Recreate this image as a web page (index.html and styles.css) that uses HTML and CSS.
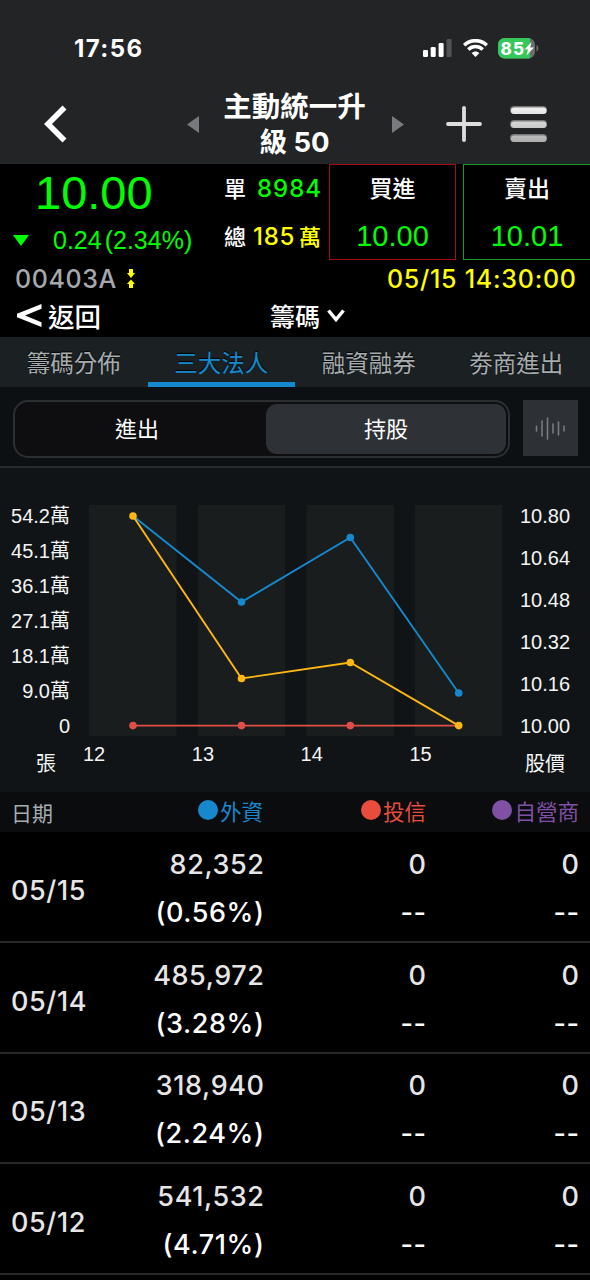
FILE: index.html
```html
<!DOCTYPE html>
<html lang="zh-Hant">
<head>
<meta charset="utf-8">
<title>主動統一升級50</title>
<link rel="stylesheet" href="styles.css">
</head>
<body>
<div class="app">
  <header class="top">
    <div class="status">
      <span class="clock">17:56</span>
      <div class="status-icons">
        <svg width="29" height="18" viewBox="0 0 29 18"><g fill="#fff"><rect x="0" y="11" width="5" height="7" rx="1.3"/><rect x="7.7" y="8" width="5" height="10" rx="1.3"/><rect x="15.6" y="4" width="5" height="14" rx="1.3"/></g><rect x="23.6" y="0" width="5" height="18" rx="1.3" fill="#515355"/></svg>
        <svg width="25" height="18" viewBox="0 0 25 18" fill="none" stroke="#fff" stroke-width="3.5"><path d="M1.2 6.2C7.5 .1 17.500 .1 23.800 6.200"/><path d="M5.300 10.500C9.400 6.500 15.600 6.500 19.700 10.500"/><path d="M12.500 18L8.600 14.100C10.700 12 14.300 12 16.400 14.100Z" fill="#fff" stroke="none"/></svg>
        <svg class="battery" width="41" height="21" viewBox="0 0 41 21"><defs><clipPath id="cell"><rect width="37" height="20.500" rx="6.500"/></clipPath></defs><g clip-path="url(#cell)"><rect width="37" height="21" fill="#6b6d6f"/><rect width="32" height="21" fill="#34c759"/></g><path d="M38.500 7C41 8 41 12.500 38.500 13.500Z" fill="#6b6d6f"/><text x="2.500" y="16.500" class="charge" textLength="23.500">85</text><path d="M33.500 4L26.500 11.500H30L28.500 17.500L36 9.500H32.200Z" fill="#fff"/></svg>
      </div>
    </div>
    <div class="nav">
      <svg class="back" width="24" height="38" viewBox="0 0 24 38"><path d="M20.500 2.500L4 19L20.500 35.500" fill="none" stroke="#fff" stroke-width="5.600"/></svg>
      <svg class="prev" width="12" height="17" viewBox="0 0 12 17"><path d="M12 0V17L0 8.500Z" fill="#777b7e"/></svg>
      <h1 class="title">主動統一升<br><span class="level">級 50</span></h1>
      <svg class="next" width="12" height="17" viewBox="0 0 12 17"><path d="M0 0V17L12 8.500Z" fill="#777b7e"/></svg>
      <svg class="plus" width="36" height="36" viewBox="0 0 36 36"><path d="M18 2V34M2 18H34" stroke="#dedede" stroke-width="3.800" stroke-linecap="round"/></svg>
      <svg class="menu" width="38" height="38" viewBox="0 0 38 38"><defs><linearGradient id="bar" x1="0" y1="0" x2="0" y2="38" gradientUnits="userSpaceOnUse"><stop stop-color="#f5f5f5"/><stop offset="1" stop-color="#acacac"/></linearGradient></defs><g fill="#777"><rect x="0" y="1" width="37" height="8" rx="4"/><rect x="0" y="15" width="37" height="8" rx="4"/><rect x="0" y="29" width="37" height="8" rx="4"/></g><g fill="url(#bar)"><rect x="1" y="2.500" width="35.500" height="6.500" rx="3.200"/><rect x="1" y="16.500" width="35.500" height="6.500" rx="3.200"/><rect x="1" y="30.500" width="35.500" height="6.500" rx="3.200"/></g></svg>
    </div>
  </header>

  <section class="quote">
    <div class="quote-main">
      <div class="last">
        <div class="price">10.00</div>
        <div class="change"><svg width="16" height="11" viewBox="0 0 16 11"><path d="M0 0H16L8 11Z" fill="#0f0"/></svg><span class="delta">0.24<span class="percent">(2.34%)</span></span></div>
      </div>
      <div class="volume">
        <div class="vol"><span>單</span><span class="down single">8984</span></div>
        <div class="vol"><span>總</span><span class="yellow total">185<span class="unit">萬</span></span></div>
      </div>
      <div class="box buy"><span class="box-name">買進</span><span class="box-price">10.00</span></div>
      <div class="box sell"><span class="box-name">賣出</span><span class="box-price">10.01</span></div>
    </div>
    <div class="quote-info"><span class="code">00403A</span><svg width="8" height="20" viewBox="0 0 8 20"><path d="M2 0H6V4H8L4 9L0 4H2ZM4 10.500L8 15H6V19H2V15H0Z" fill="#ff0"/></svg><span class="time">05/15 14:30:00</span></div>
    <div class="quote-nav">
      <svg width="25" height="23" viewBox="0 0 25 23"><path d="M24.500 0V4.800L8 11.500L24.500 18.200V23L0 13.200V9.800Z" fill="#fff"/></svg>
      <span class="return">返回</span>
      <span class="chips">籌碼</span>
      <svg width="18" height="13" viewBox="0 0 18 13"><path d="M1.500 1.500L9 10.500L16.500 1.500" fill="none" stroke="#fff" stroke-width="3.500"/></svg>
    </div>
  </section>

  <nav class="tabs"><span class="tab">籌碼分佈</span><span class="tab active">三大法人</span><span class="tab">融資融券</span><span class="tab">劵商進出</span></nav>

  <div class="controls">
    <div class="segment"><span class="option">進出</span><span class="option selected">持股</span></div>
    <div class="wave"><svg width="31" height="23" viewBox="0 0 31 23"><path d="M1.500 9V14M7 4V19M12.500 1V22M18 7V16M23.500 5V18M29 9V14" stroke="#787c7f" stroke-width="1.600" stroke-linecap="round"/></svg></div>
  </div>

  <section class="chart">
    <div class="axis left"><span>54.2萬</span><span>45.1萬</span><span>36.1萬</span><span>27.1萬</span><span>18.1萬</span><span>9.0萬</span><span>0</span></div>
    <div class="plot-col">
      <svg class="plot" width="414" height="232" viewBox="89 505 414 232">
        <g fill="#1a1d1d"><rect x="89" y="505" width="87.500" height="231"/><rect x="197.700" y="505" width="87.500" height="231"/><rect x="306.500" y="505" width="87.500" height="231"/><rect x="415" y="505" width="87.500" height="231"/></g>
        <g fill="none" stroke-width="1.900"><path stroke="#1689ce" d="M133 516L241.500 602L350.300 537.500L458.700 693"/><path stroke="#e04f47" d="M133 725.600H458.700"/><path stroke="#fdb813" d="M133 516L241.500 678.500L350.300 662.500L458.700 725.600"/></g>
        <g fill="#1689ce"><circle cx="241.500" cy="602" r="3.800"/><circle cx="350.300" cy="537.500" r="3.800"/><circle cx="458.700" cy="693" r="3.800"/></g>
        <g fill="#e04f47"><circle cx="133" cy="725.600" r="3.800"/><circle cx="241.500" cy="725.600" r="3.800"/><circle cx="350.300" cy="725.600" r="3.800"/></g>
        <g fill="#fdb813"><circle cx="133" cy="516" r="3.800"/><circle cx="241.500" cy="678.500" r="3.800"/><circle cx="350.300" cy="662.500" r="3.800"/><circle cx="458.700" cy="725.600" r="3.800"/></g>
      </svg>
      <div class="dates"><span>12</span><span>13</span><span>14</span><span>15</span></div>
    </div>
    <div class="axis right"><span>10.80</span><span>10.64</span><span>10.48</span><span>10.32</span><span>10.16</span><span>10.00</span></div>
    <span class="unit-left">張</span><span class="unit-right">股價</span>
  </section>

  <section class="table">
    <div class="thead"><span>日期</span><span class="series foreign"><i class="dot"></i>外資</span><span class="series trust"><i class="dot"></i>投信</span><span class="series dealer"><i class="dot"></i>自營商</span></div>
    <div class="row"><span class="date">05/15</span><div class="cell"><span>82,352</span><b>(0.56%)</b></div><div class="cell"><span>0</span><b>--</b></div><div class="cell"><span>0</span><b>--</b></div></div>
    <div class="row"><span class="date">05/14</span><div class="cell"><span>485,972</span><b>(3.28%)</b></div><div class="cell"><span>0</span><b>--</b></div><div class="cell"><span>0</span><b>--</b></div></div>
    <div class="row"><span class="date">05/13</span><div class="cell"><span>318,940</span><b>(2.24%)</b></div><div class="cell"><span>0</span><b>--</b></div><div class="cell"><span>0</span><b>--</b></div></div>
    <div class="row"><span class="date">05/12</span><div class="cell"><span>541,532</span><b>(4.71%)</b></div><div class="cell"><span>0</span><b>--</b></div><div class="cell"><span>0</span><b>--</b></div></div>
  </section>
</div>
</body>
</html>
```
FILE: styles.css
```css
* { box-sizing: border-box; }
body { margin: 0; background: #000; color: #fff; font-family: Inter, "Noto Sans CJK TC", sans-serif; }
svg { display: block; flex: none; }
.app { width: 590px; height: 1280px; overflow: hidden; display: flex; flex-direction: column; }
.app > * { flex: none; }

.top { height: 164px; background: #222426; }
.status { height: 84px; padding: 33px 51px 0 74px; display: flex; justify-content: space-between; align-items: flex-start; }
.clock { font-size: 24px; line-height: 31px; font-weight: 700; letter-spacing: 1.400px; }
.status-icons { display: flex; align-items: center; gap: 11px; height: 30px; }
.battery { margin-left: -1px; }
.charge { font: 800 17px Inter, sans-serif; fill: #fff; }
.nav { height: 80px; display: flex; align-items: center; padding-left: 44px; }
.prev { margin-left: 119px; }
.title { margin: 0 0 0 23px; padding-top: 1px; width: 145px; font: 700 28.500px/35px Inter, "Noto Sans CJK TC", sans-serif; text-align: center; white-space: nowrap; }
.level { font-size: 27.500px; }
.next { margin-left: 25px; }
.plus { margin-left: 42px; }
.menu { margin-left: 28px; }

.quote { height: 173px; }
.quote-main { height: 97px; display: flex; }
.last { width: 224px; color: #0f0; font-family: "Liberation Sans", sans-serif; }
.price { height: 56px; line-height: 58px; font-size: 47px; padding-left: 35px; }
.change { height: 40px; display: flex; align-items: center; padding-left: 13px; }
.delta { margin-left: 24px; font-size: 25px; white-space: nowrap; }
.percent { margin-left: 3px; }
.volume { width: 97px; font-size: 22px; font-weight: 500; }
.vol { height: 48px; line-height: 50px; display: flex; justify-content: space-between; }
.down { color: #0f0; }
.yellow { color: #ff0; }
.single { font-size: 24px; letter-spacing: 1px; margin-right: -1px; }
.total { font-size: 24px; letter-spacing: .700px; }
.unit { font-size: 22px; margin-left: 4px; letter-spacing: 0; }
.box { height: 96px; display: flex; flex-direction: column; align-items: center; border: 1px solid #a50f14; font-weight: 500; }
.buy { width: 127px; margin-left: 8px; }
.sell { width: 127px; margin-left: 7px; border-color: #14a01b; border-right: 0; }
.box-name { height: 47px; line-height: 49px; font-size: 23px; }
.box-price { height: 47px; line-height: 49px; color: #0f0; font-family: "Liberation Sans", sans-serif; font-size: 29px; font-weight: 400; }
.quote-info { height: 35px; display: flex; align-items: center; padding: 0 14px 0 15px; font-size: 25px; }
.code { color: #a5a9ad; margin-right: 10px; font-weight: 500; letter-spacing: .600px; }
.time { color: #ff0; margin-left: auto; font-weight: 500; letter-spacing: .750px; margin-right: -.750px; }
.quote-nav { height: 41px; display: flex; align-items: center; padding: 0 0 3px 17px; font-size: 26.500px; font-weight: 500; }
.return { margin-left: 6px; }
.chips { margin-left: 169px; margin-right: 7px; font-size: 25px; }

.tabs { height: 50px; display: grid; grid-template-columns: repeat(4, 1fr); background: #1b2023; color: #a6abae; font-size: 23.500px; text-align: center; line-height: 53px; }
.active { color: #1689ce; border-bottom: 5px solid #1689ce; }
.tab { height: 50px; text-shadow: 0 -1px 1px #000; }

.controls { height: 81px; display: flex; padding: 13px 12px 0 13px; justify-content: space-between; background: #0d1013; border-bottom: 2px solid #282b2e; }
.segment { width: 497px; height: 58px; border: 2px solid #2b2f32; border-radius: 15px; background: #0e0e11; display: flex; padding: 2px 2px 2px 1px; }
.option { flex: 1; border-radius: 11px; text-align: center; font-size: 22px; line-height: 50px; padding-right: 8px; }
.option.selected { flex: none; width: 240px; background: #2e3236; padding: 0; }
.wave { width: 55px; height: 56px; background: #2d3135; display: grid; place-items: center; }

.chart { height: 324px; background: #101417; display: grid; grid-template-columns: 71px 450px 1fr; grid-template-rows: 280px 1fr; font-family: "Liberation Sans", "Noto Sans CJK TC", sans-serif; font-size: 20px; color: #f4f4f4; }
.axis { display: flex; flex-direction: column; justify-content: space-between; height: 232px; margin-top: 37px; line-height: 22px; }
.left { text-align: right; padding-right: 1px; }
.right { margin-left: -1px; }
.plot-col { padding: 37px 0 0 18px; }
.dates { display: flex; margin-left: -6px; margin-top: 5px; line-height: 24px; }
.dates span { width: 108.800px; flex: none; }
.unit-left { padding-left: 36px; line-height: 32px; }
.unit-right { grid-column: 3; padding-left: 4px; line-height: 32px; }

.thead { height: 40px; background: #0a0c0e; display: grid; grid-template-columns: 100px 163px 163px 153px; align-items: center; font-size: 21px; }
.thead > :first-child { padding-left: 11px; color: #a6abae; }
.series { display: flex; justify-content: flex-end; align-items: center; padding-bottom: 4px; font-size: 21.500px; }
.dot { width: 20px; height: 20px; border-radius: 50%; background: currentColor; margin-right: 2px; }
.foreign { color: #1689ce; }
.trust { color: #e74c3c; }
.dealer { color: #8050a4; }
.row { height: 110.800px; border-bottom: 2px solid #27282a; display: grid; grid-template-columns: 100px 164px 162px 153px; align-items: center; font-size: 27px; font-weight: 500; letter-spacing: .600px; color: #e6e6e6; }
.date { padding: 8px 0 0 11px; }
.cell { display: flex; flex-direction: column; text-align: right; line-height: 48px; padding-top: 5px; margin-right: -.600px; }
.cell b { color: #fff; font-weight: 500; }
```
